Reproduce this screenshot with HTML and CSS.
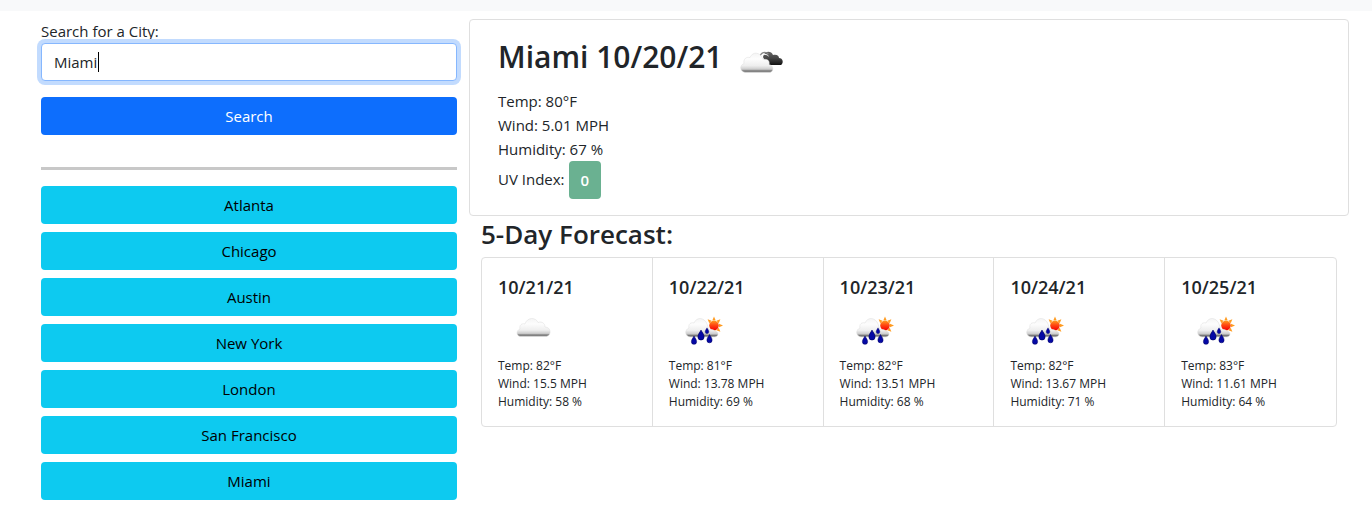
FILE: index.html
```html
<!DOCTYPE html>
<html lang="en">
<head>
<meta charset="utf-8">
<meta name="viewport" content="width=device-width, initial-scale=1">
<title>Weather Dashboard</title>
<link rel="stylesheet" href="styles.css">
</head>
<body>
<svg class="defs" aria-hidden="true">
  <defs>
    <linearGradient id="light" x1="0" y1="0" x2="0" y2="1">
      <stop offset="0" stop-color="#f4f4f4"/><stop offset=".3" stop-color="#fdfdfd"/><stop offset=".65" stop-color="#eee"/><stop offset=".83" stop-color="#ccc"/><stop offset=".92" stop-color="#777"/><stop offset="1" stop-color="#999"/>
    </linearGradient>
    <linearGradient id="dark" x1="0" y1="0" x2="0" y2="1">
      <stop offset="0" stop-color="#666"/><stop offset=".5" stop-color="#444"/><stop offset="1" stop-color="#111"/>
    </linearGradient>
    <linearGradient id="sun" x1="0" y1="0" x2="0" y2="1">
      <stop offset="0" stop-color="#ff9a1f"/><stop offset=".45" stop-color="#ff4a12"/><stop offset="1" stop-color="#f40000"/>
    </linearGradient>
    <path id="drop" d="M0-4.500C1-2.500 2.600-1 2.600 1.200a2.600 2.600 0 0 1-5.200 0C-2.600-1-1-2.500 0-4.500z"/>
    <symbol id="cloud" viewBox="0 0 70 50">
      <path d="M22 33.500c-4-1-4-6 0-7.500-1-4 2-6 5-5 2-7 11-7 13-1.500 4-1.500 7 1 7 4.500 6 0 7 8 1.500 9.500z" fill="url(#light)" stroke="#ddd" stroke-width=".5"/>
    </symbol>
    <symbol id="rain" viewBox="0 0 70 50">
      <g fill="#ff9b20">
        <path id="ray" d="M43.300 17.500L45 13.500l1.700 4z"/>
        <use href="#ray" transform="rotate(45 45 22.500)"/>
        <use href="#ray" transform="rotate(90 45 22.500)"/>
        <use href="#ray" transform="rotate(135 45 22.500)"/>
        <use href="#ray" transform="rotate(180 45 22.500)"/>
        <use href="#ray" transform="rotate(-45 45 22.500)"/>
      </g>
      <circle cx="45" cy="22.500" r="4.800" fill="url(#sun)"/>
      <path d="M21 34c-5-1-6-7-1-9-1-4 2-6 5-5 3-7 11-5 13 1 1 2 1 4 2 6 3-1 5 0 6 1 4 1 4 5 0 6z" fill="url(#light)" stroke="#ddd" stroke-width=".5"/>
      <g fill="#0508a5" stroke="#00005c" stroke-width=".5">
        <use href="#drop" x="25" y="37.500"/>
        <use href="#drop" transform="translate(32 32.500) scale(1.200)"/>
        <use href="#drop" x="40.500" y="36"/>
        <use href="#drop" transform="translate(38 28) scale(.7)"/>
      </g>
    </symbol>
    <symbol id="broken" viewBox="0 0 50 50">
      <path d="M24 19c1-6 8-7 10-2 4-1 6 1 6 3 4 0 5 5 2 7H28z" fill="url(#dark)"/>
      <path d="M20.500 20c1-6 6-7 9-4" fill="none" stroke="#888" stroke-width="1.200"/>
      <path d="M21.500 21c1-5 5-6 8-3" fill="none" stroke="#fff" stroke-width="1"/>
      <path d="M6 34.500c-5-1-6-7-1-9-1-5 3-7 6-6 3-7 11-5 13 2 5-1 7 2 6 5 5 1 5 7 1 8z" fill="url(#light)" stroke="#ddd" stroke-width=".5"/>
    </symbol>
  </defs>
</svg>
<header class="topbar"></header>
<div class="layout">
  <aside class="sidebar">
    <form class="search">
      <label for="city">Search for a City:</label>
      <div class="field">
        <input class="field-input" id="city" type="text" value="Miami">
        <span class="caret"></span>
      </div>
      <button class="btn btn-primary" type="button">Search</button>
    </form>
    <hr class="divider">
    <div class="history">
      <button class="btn btn-info" type="button">Atlanta</button>
      <button class="btn btn-info" type="button">Chicago</button>
      <button class="btn btn-info" type="button">Austin</button>
      <button class="btn btn-info" type="button">New York</button>
      <button class="btn btn-info" type="button">London</button>
      <button class="btn btn-info" type="button">San Francisco</button>
      <button class="btn btn-info" type="button">Miami</button>
    </div>
  </aside>
  <main>
    <section class="current">
      <h2 class="current-title">Miami 10/20/21 <svg class="title-icon" role="img" aria-label="broken clouds"><use href="#broken"/></svg></h2>
      <p>Temp: 80°F</p>
      <p>Wind: 5.01 MPH</p>
      <p>Humidity: 67 %</p>
      <p class="uv">UV Index: <button class="btn btn-uv" type="button">0</button></p>
    </section>
    <section class="forecast">
      <h3 class="forecast-title">5-Day Forecast:</h3>
      <div class="days">
        <article class="day"><h5>10/21/21</h5><svg class="day-icon" role="img" aria-label="cloudy"><use href="#cloud"/></svg><p>Temp: 82°F</p><p>Wind: 15.5 MPH</p><p>Humidity: 58 %</p></article>
        <article class="day"><h5>10/22/21</h5><svg class="day-icon" role="img" aria-label="rain"><use href="#rain"/></svg><p>Temp: 81°F</p><p>Wind: 13.78 MPH</p><p>Humidity: 69 %</p></article>
        <article class="day"><h5>10/23/21</h5><svg class="day-icon" role="img" aria-label="rain"><use href="#rain"/></svg><p>Temp: 82°F</p><p>Wind: 13.51 MPH</p><p>Humidity: 68 %</p></article>
        <article class="day"><h5>10/24/21</h5><svg class="day-icon" role="img" aria-label="rain"><use href="#rain"/></svg><p>Temp: 82°F</p><p>Wind: 13.67 MPH</p><p>Humidity: 71 %</p></article>
        <article class="day"><h5>10/25/21</h5><svg class="day-icon" role="img" aria-label="rain"><use href="#rain"/></svg><p>Temp: 83°F</p><p>Wind: 11.61 MPH</p><p>Humidity: 64 %</p></article>
      </div>
    </section>
  </main>
</div>
</body>
</html>
```
FILE: styles.css
```css
* { box-sizing: border-box; }
body {
  margin: 0;
  background: #fff;
  color: #212529;
  font: 400 15px/24px "Segoe UI", "Open Sans", "Noto Sans", sans-serif;
}
h2, h3, h5, p { margin: 0; }
h2, h3, h5 { font-weight: 600; }
.defs { position: absolute; width: 0; height: 0; }
.topbar { height: 11px; background: #f8f9fa; }
.layout {
  display: grid;
  grid-template-columns: minmax(0, 1fr) minmax(0, 2fr);
  padding: 8px 23px 19px 29px;
}
.sidebar { padding: 0 12px; }
.search { display: flex; flex-direction: column; }
.field { position: relative; margin-bottom: 16px; }
.field-input {
  display: block;
  width: 100%;
  height: 38px;
  padding: 6px 12px;
  border: 1px solid #86b7fe;
  border-radius: 4px;
  outline: 0;
  box-shadow: 0 0 0 4px #c2dbfe;
  background: #fff;
  color: #212529;
  font: inherit;
}
.caret { position: absolute; left: 57px; top: 9px; width: 1px; height: 20px; background: #000; }
.btn {
  display: block;
  width: 100%;
  height: 38px;
  padding: 6px 12px;
  border: 0;
  border-radius: 4px;
  font: inherit;
}
.btn-primary { background: #0d6efd; color: #fff; }
.btn-info { background: #0dcaf0; color: #000; }
.btn-uv { width: auto; padding: 6px 12px; background: #6ab191; color: #fff; font-weight: 600; line-height: 24px; }
.divider { height: 3px; margin: 32px 0 16px; border: 0; background: #c8c8c8; }
.history { display: grid; gap: 8px; }
.current { padding: 16px 28px; border: 1px solid #dfdfdf; border-radius: 4px; }
.current-title {
  display: flex;
  gap: 16px;
  height: 42px;
  margin-bottom: 11px;
  font-size: 30px;
  line-height: 42px;
}
.title-icon { width: 50px; height: 50px; margin-top: 2px; }
.uv { display: flex; gap: 4px; line-height: 36px; }
.forecast { padding: 0 12px; }
.forecast-title { margin-bottom: 4px; font-size: 26px; line-height: 37px; }
.days {
  display: grid;
  grid-template-columns: repeat(5, 1fr);
  border: 1px solid #dfdfdf;
  border-radius: 4px;
}
.day { padding: 16px 16px 15px; font-size: 12px; line-height: 18px; }
.day:not(:last-child) { border-right: 1px solid #dfdfdf; }
.day h5 { font-size: 18px; line-height: 26px; }
.day-icon { display: block; width: 70px; height: 50px; margin: 3px 0 4px; }
```
